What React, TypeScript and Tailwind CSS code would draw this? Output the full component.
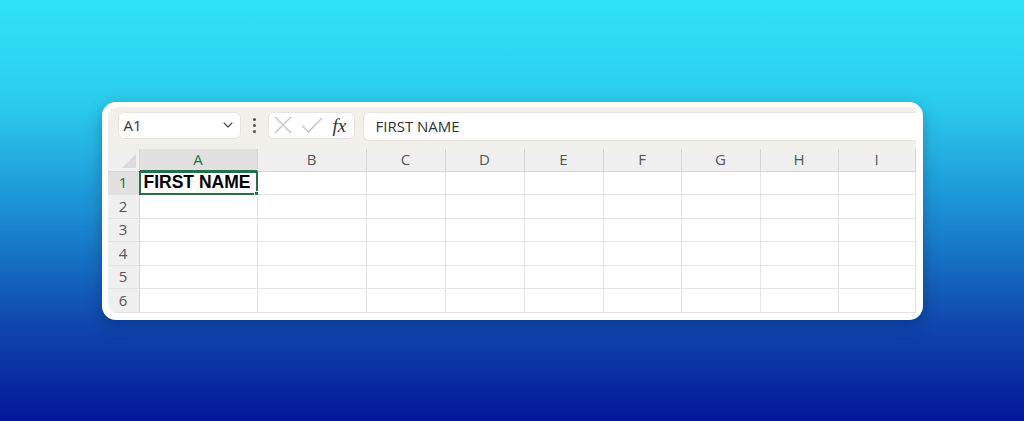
import { ChevronDown } from "lucide-react";

const cols = ["A", "B", "C", "D", "E", "F", "G", "H", "I"];
const rows = [
  { n: 1, h: "h-[23px]" },
  { n: 2, h: "h-[24px]" },
  { n: 3, h: "h-[23px]" },
  { n: 4, h: "h-[24px]" },
  { n: 5, h: "h-[23px]" },
  { n: 6, h: "h-[24px]" },
];

const uiFont = { fontFamily: '"Open Sans", "Noto Sans", sans-serif' };

function Toolbar() {
  return (
    <div className="flex h-[42px] items-start bg-[#f2f0eb] pl-[10px] pt-[5px]">
      {/* name box */}
      <div className="flex h-[27px] w-[123px] items-center justify-between rounded-[6px] border border-[#e7e4de] bg-white pl-[5px] pr-[4px]">
        <span className="text-[15px] text-[#333]">A1</span>
        <ChevronDown size={16} strokeWidth={1.6} className="text-[#444]" />
      </div>
      <div className="flex h-[27px] w-[27px] flex-col items-center justify-center gap-[3px]">
        <span className="h-[3px] w-[3px] rounded-full bg-[#555]" />
        <span className="h-[3px] w-[3px] rounded-full bg-[#555]" />
        <span className="h-[3px] w-[3px] rounded-full bg-[#555]" />
      </div>
      {/* cancel / enter / fx */}
      <div className="flex h-[27px] w-[87px] items-center rounded-[6px] border border-[#e7e4de] bg-white pl-[5px]">
        <svg width="18" height="18" viewBox="0 0 18 18" className="shrink-0">
          <path d="M1 1 L17 17 M17 1 L1 17" stroke="#c3c3c3" strokeWidth="1.3" fill="none" />
        </svg>
        <svg width="22" height="16" viewBox="0 0 22 16" className="ml-[9px] shrink-0">
          <path d="M1 8.5 L7.5 15 L21 1" stroke="#c3c3c3" strokeWidth="1.3" fill="none" />
        </svg>
        <span
          className="ml-[10px] text-[19px] italic leading-none text-[#333]"
          style={{ fontFamily: '"Liberation Serif", "DejaVu Serif", serif' }}
        >
          fx
        </span>
      </div>
      {/* formula bar */}
      <div className="ml-[8px] flex h-[29px] flex-1 items-center rounded-l-[6px] border border-r-0 border-[#e7e4de] bg-white pl-[12px]">
        <span className="text-[15px] text-[#333]">FIRST NAME</span>
      </div>
    </div>
  );
}

function Row({ n, h }: { n: number; h: string }) {
  const selected = n === 1;
  return (
    <>
      <div
        className={
          selected
            ? `flex ${h} items-center justify-center border-b border-r border-b-[#e3e3e3] border-r-[#d6d6d6] bg-[#e1e1e1] text-[15px] text-[#217346]`
            : `flex ${h} items-center justify-center border-b border-r border-b-[#e3e3e3] border-r-[#d6d6d6] bg-[#f0f0f0] text-[15px] text-[#555]`
        }
      >
        {n}
      </div>
      {cols.map((c) => (
        <div key={c} className={`relative ${h} border-b border-r border-[#e3e3e3]`}>
          {selected && c === "A" && (
            <div className="absolute -left-[1px] -top-[1px] bottom-[-1px] right-[-1px] flex items-center whitespace-nowrap border-2 border-[#217346] pl-[3px]">
              <span
                className="text-[17.5px] font-bold leading-none text-black"
                style={{ fontFamily: '"Liberation Sans", Arial, sans-serif' }}
              >
                FIRST NAME
              </span>
              <span className="absolute -bottom-[3px] -right-[3px] h-[5px] w-[5px] border border-white bg-[#217346]" />
            </div>
          )}
        </div>
      ))}
    </>
  );
}

function Grid() {
  return (
    <div className="grid grid-cols-[32px_118px_109px_79px_79px_79px_78px_79px_78px_1fr] bg-white">
      {/* header row */}
      <div className="relative h-[23px] border-b border-r border-[#d6d6d6] bg-[#f0f0f0]">
        <svg width="14" height="14" viewBox="0 0 14 14" className="absolute bottom-[3px] right-[3px]">
          <path d="M14 0 L14 14 L0 14 Z" fill="#dcdcdc" />
        </svg>
      </div>
      {cols.map((c) => (
        <div
          key={c}
          className={
            c === "A"
              ? "flex h-[23px] items-center justify-center border-b-2 border-r border-b-[#217346] border-r-[#d6d6d6] bg-[#e1e1e1] text-[15px] text-[#217346]"
              : "flex h-[23px] items-center justify-center border-b border-r border-[#d6d6d6] bg-[#f0f0f0] text-[15px] text-[#555]"
          }
        >
          {c}
        </div>
      ))}
      {rows.map((r) => (
        <Row key={r.n} n={r.n} h={r.h} />
      ))}
    </div>
  );
}

export default function App() {
  return (
    <div
      className="flex h-[421px] w-[1024px] items-center justify-center bg-[linear-gradient(180deg,#2fe3f6_0%,#2bcbee_25%,#1b8fd3_50%,#0f4cae_75%,#04169a_100%)]"
      style={uiFont}
    >
      <div className="h-[218px] w-[821px] rounded-[14px] bg-white pb-[7px] pl-[6px] pr-[7px] pt-[5px] shadow-[0_4px_16px_rgba(0,0,40,0.25)]">
        <div className="h-full overflow-hidden rounded-l-[9px]">
          <Toolbar />
          <Grid />
        </div>
      </div>
    </div>
  );
}
